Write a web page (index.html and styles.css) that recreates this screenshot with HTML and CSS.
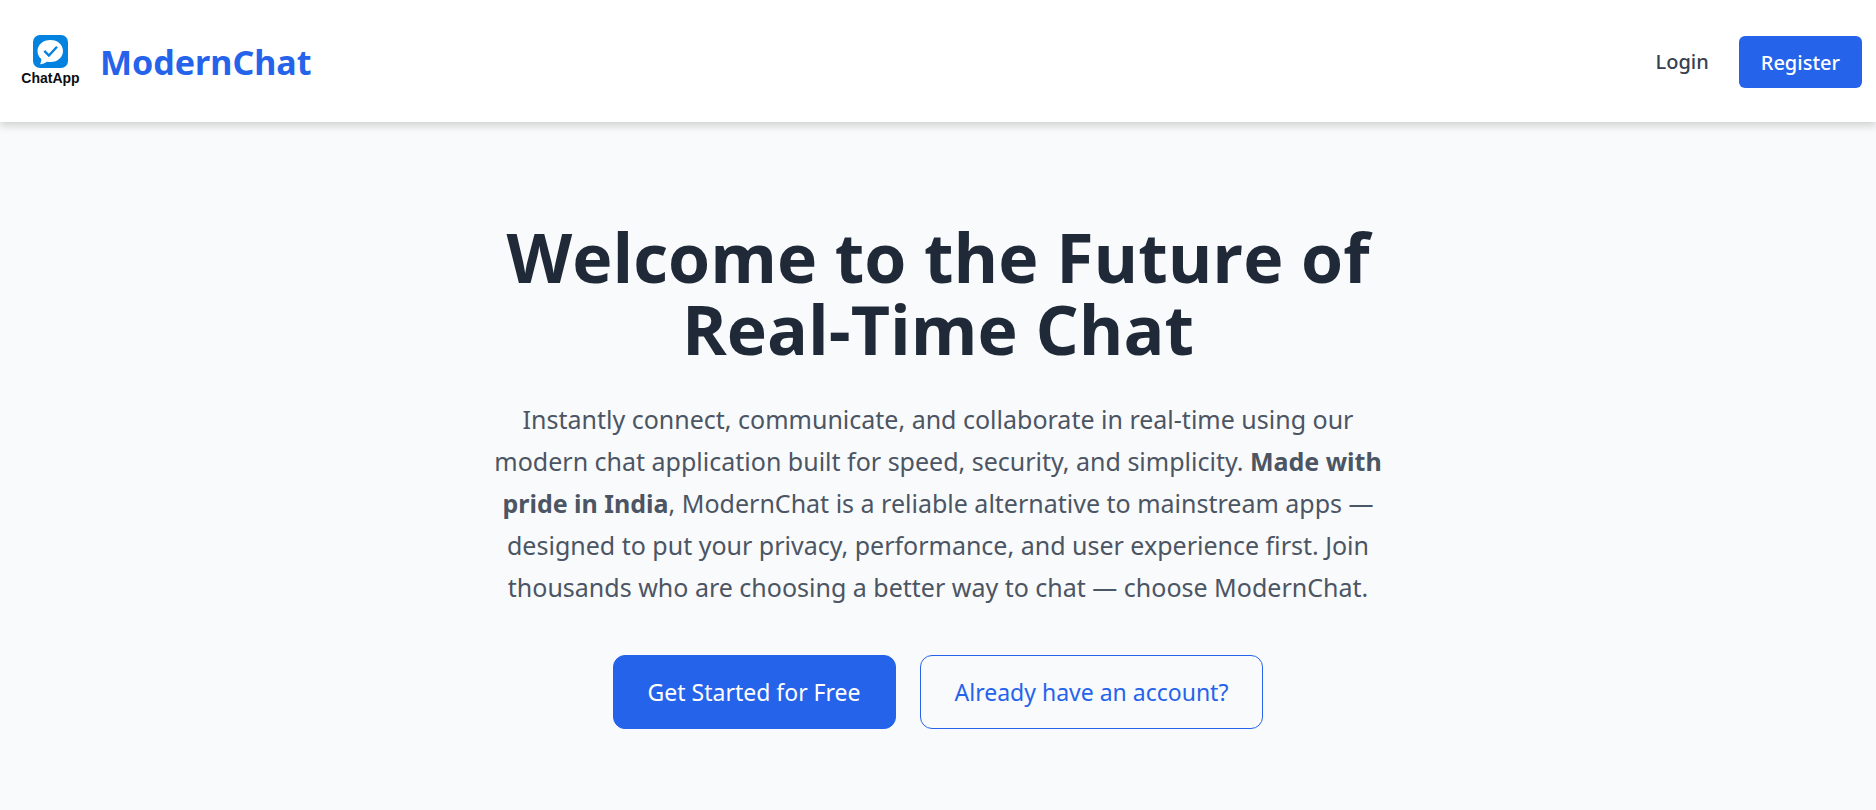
FILE: index.html
```html
<!DOCTYPE html>
<html lang="en">
<head>
  <meta charset="utf-8">
  <meta name="viewport" content="width=device-width, initial-scale=1">
  <title>ModernChat</title>
  <link rel="stylesheet" href="styles.css">
</head>
<body>
  <header class="site-header">
    <a class="brand" href="#">
      <svg class="brand-logo" viewBox="0 0 72 72" role="img" aria-label="ChatApp">
        <rect x="19" y="10" width="35" height="33" rx="7" fill="#0482e0"/>
        <path d="M36.500 15C29 15 23.500 19.800 23.500 26c0 3.400 1.500 6 3.800 8 0 2-.4 3.700-1.300 5.200 2.700-.2 5-1 6.800-2.500 1.200.2 2.400.3 3.700.3C43.800 37 49 32.200 49 26S43.800 15 36.500 15Z" fill="#fff"/>
        <path d="m30.300 25.800 4.600 4.700 8.100-8.700" fill="none" stroke="#0482e0" stroke-width="2.400"/>
        <text class="logo-text" x="36.500" y="58" text-anchor="middle">ChatApp</text>
      </svg>
      <span class="brand-name">ModernChat</span>
    </a>
    <nav class="site-nav">
      <a class="nav-link" href="#login">Login</a>
      <a class="nav-button" href="#register">Register</a>
    </nav>
  </header>
  <main class="hero">
    <div class="hero-content">
      <h1 class="hero-title">Welcome to the Future of Real-Time Chat</h1>
      <p class="hero-text">Instantly connect, communicate, and collaborate in real-time using our modern chat application built for speed, security, and simplicity. <strong>Made with pride in India</strong>, ModernChat is a reliable alternative to mainstream apps — designed to put your privacy, performance, and user experience first. Join thousands who are choosing a better way to chat — choose ModernChat.</p>
      <div class="hero-actions">
        <a class="action action-primary" href="#register">Get Started for Free</a>
        <a class="action action-outline" href="#login">Already have an account?</a>
      </div>
    </div>
  </main>
</body>
</html>
```
FILE: styles.css
```css
* {
  box-sizing: border-box;
}

body {
  display: flex;
  flex-direction: column;
  min-height: 100vh;
  margin: 0;
  background: #f9fafb;
  color: #1f2937;
  font-family: "Noto Sans", "Open Sans", sans-serif;
}

a {
  text-decoration: none;
}

.site-header {
  display: flex;
  align-items: center;
  justify-content: space-between;
  padding: 25px 14px;
  background: #fff;
  box-shadow: 0 4px 8px rgba(0, 10, 0, 0.16);
}

.brand {
  display: flex;
  align-items: center;
  gap: 14px;
}

.brand-logo {
  width: 72px;
  height: 72px;
}

.logo-text {
  fill: #0b0d12;
  font-family: "Liberation Sans", sans-serif;
  font-size: 14px;
  font-weight: 700;
}

.brand-name {
  padding-top: 2px;
  color: #2563eb;
  font-size: 34px;
  font-weight: 700;
}

.site-nav {
  display: flex;
  align-items: center;
  gap: 30px;
  padding-top: 2px;
}

.nav-link,
.nav-button {
  font-size: 20px;
  font-weight: 500;
  line-height: 28px;
}

.nav-link {
  color: #374151;
}

.nav-button {
  padding: 13px 22px 11px;
  border-radius: 6px;
  background: #2563eb;
  color: #fff;
}

.hero {
  flex: 1;
  padding: 99px 24px 80px;
  text-align: center;
}

.hero-content {
  max-width: 922px;
  margin: 0 auto;
}

.hero-title {
  margin: 0 0 33px;
  font-family: "Open Sans", "Noto Sans", sans-serif;
  font-size: 68px;
  font-weight: 700;
  line-height: 72px;
}

.hero-text {
  margin: 0 0 47px;
  color: #4b5563;
  font-size: 25px;
  line-height: 42px;
}

.hero-actions {
  display: flex;
  flex-wrap: wrap;
  justify-content: center;
  gap: 24px;
}

.action {
  padding: 19px 34px;
  border: 1px solid #2563eb;
  border-radius: 12px;
  font-size: 23px;
  line-height: 34px;
}

.action-primary {
  background: #2563eb;
  color: #fff;
}

.action-outline {
  color: #2563eb;
}
```
